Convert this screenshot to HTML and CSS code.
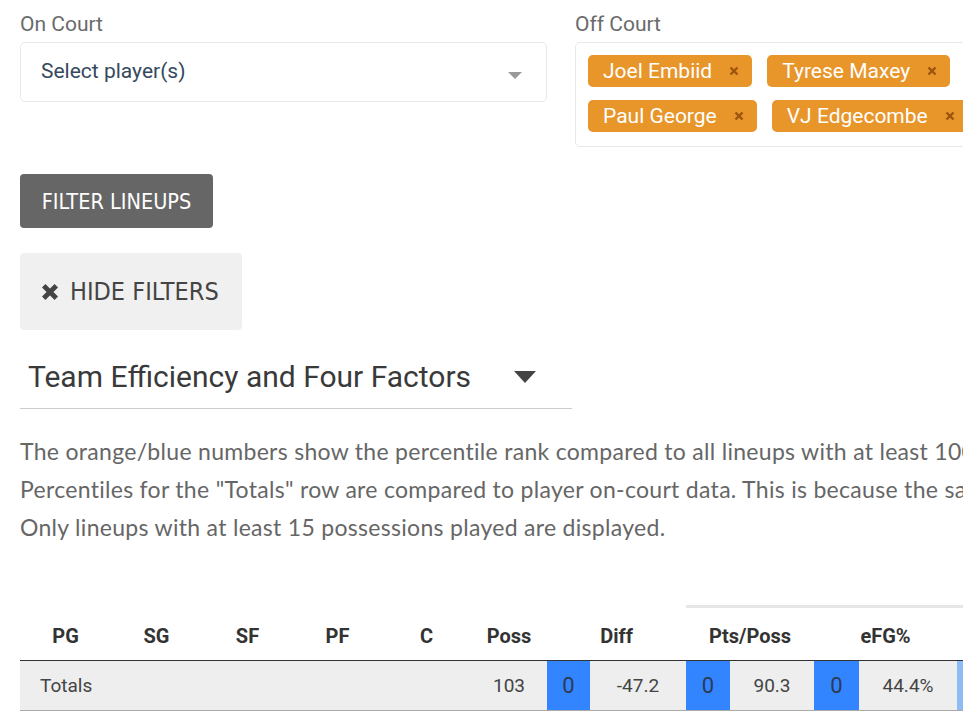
FILE: index.html
```html
<!DOCTYPE html>
<html lang="en">
<head>
  <meta charset="UTF-8" />
  <title>Lineups</title>
  <link rel="stylesheet" href="styles.css">
</head>
<body>
  <div class="page">
    <!-- player pickers -->
    <div class="pickers">
      <div class="picker">
        <label class="picker-label">On Court</label>
        <div class="select">
          <span class="select-placeholder">Select player(s)</span>
          <span class="select-caret"></span>
        </div>
      </div>
      <div class="picker">
        <label class="picker-label">Off Court</label>
        <div class="select select-tags">
          <span class="tag">Joel Embiid <svg class="tag-x" viewBox="0 0 10 10"><path d="M1.5 1.5L8.5 8.5M8.5 1.5L1.5 8.5"/></svg></span>
          <span class="tag">Tyrese Maxey <svg class="tag-x" viewBox="0 0 10 10"><path d="M1.5 1.5L8.5 8.5M8.5 1.5L1.5 8.5"/></svg></span>
          <span class="tag">Paul George <svg class="tag-x" viewBox="0 0 10 10"><path d="M1.5 1.5L8.5 8.5M8.5 1.5L1.5 8.5"/></svg></span>
          <span class="tag">VJ Edgecombe <svg class="tag-x" viewBox="0 0 10 10"><path d="M1.5 1.5L8.5 8.5M8.5 1.5L1.5 8.5"/></svg></span>
        </div>
      </div>
    </div>

    <button class="btn btn-filter">FILTER LINEUPS</button>
    <button class="btn btn-hide"><span class="btn-hide-inner"><svg class="hide-x" viewBox="0 0 12 12"><path d="M1.8 1.8L10.2 10.2M10.2 1.8L1.8 10.2"/></svg>HIDE FILTERS</span></button>

    <div class="stat-select">
      <span>Team Efficiency and Four Factors</span>
      <span class="stat-caret"></span>
    </div>

    <p class="note">
      The orange/blue numbers show the percentile rank compared to all lineups with at least 100 possessions played.<br>
      Percentiles for the "Totals" row are compared to player on-court data. This is because the sample is much larger.<br>
      Only lineups with at least 15 possessions played are displayed.
    </p>

    <table class="lineups">
      <colgroup>
        <col style="width:91px"><col style="width:91px"><col style="width:91px"><col style="width:89px"><col style="width:89px"><col style="width:76px">
        <col style="width:43px"><col style="width:96px">
        <col style="width:44px"><col style="width:84px">
        <col style="width:45px"><col style="width:98px">
        <col style="width:43px"><col style="width:96px">
      </colgroup>
      <thead>
        <tr class="group-row">
          <th colspan="8"></th>
          <th colspan="6" class="group-cell"></th>
        </tr>
        <tr class="head-row">
          <th>PG</th><th>SG</th><th>SF</th><th>PF</th><th>C</th><th>Poss</th>
          <th colspan="2">Diff</th>
          <th colspan="2">Pts/Poss</th>
          <th colspan="2">eFG%</th>
          <th colspan="2">TOV%</th>
        </tr>
      </thead>
      <tbody>
        <tr class="totals">
          <td colspan="5" class="label">Totals</td>
          <td>103</td>
          <td class="pct">0</td><td>-47.2</td>
          <td class="pct">0</td><td>90.3</td>
          <td class="pct">0</td><td>44.4%</td>
          <td class="pct pct-light">22</td><td>16.5%</td>
        </tr>
      </tbody>
    </table>
  </div>
</body>
</html>
```

FILE: styles.css
```css
html, body {
  margin: 0;
  overflow: hidden;
}
body {
  background: #fff;
  font-family: Roboto, "Noto Sans", sans-serif;
  color: #333;
}
.page {
  width: 1300px;
  padding: 12px 20px 0;
}

/* pickers */
.pickers {
  display: flex;
  gap: 28px;
}
.picker {
  width: 527px;
}
.picker-label {
  display: block;
  font-size: 21px;
  line-height: 24px;
  color: #6a6a6a;
  margin-bottom: 6px;
}
.select {
  box-sizing: border-box;
  min-height: 60px;
  border: 1px solid #e8e8e8;
  border-radius: 5px;
  display: flex;
  align-items: center;
  padding: 0 24px 0 20px;
}
.select-placeholder {
  flex: 1;
  font-size: 21px;
  color: #35495e;
  margin-top: -3px;
}
.select-caret {
  width: 0;
  height: 0;
  border-left: 7px solid transparent;
  border-right: 7px solid transparent;
  border-top: 7px solid #999;
  margin-top: 6px;
}
.select-tags {
  flex-wrap: wrap;
  gap: 13px 15px;
  padding: 12px 12px 14px;
}
.tag {
  display: inline-flex;
  align-items: center;
  height: 32px;
  padding: 0 13px 0 15px;
  background: #e8952a;
  color: #fff;
  font-size: 21px;
  border-radius: 5px;
  white-space: nowrap;
}
.tag-x {
  width: 10px;
  height: 10px;
  margin-left: 17px;
  stroke: #9c5510;
  stroke-width: 2.4;
  fill: none;
}

/* buttons */
.btn {
  display: block;
  border: none;
  border-radius: 4px;
  font-family: "DejaVu Sans Condensed", "Liberation Sans Narrow", Roboto, sans-serif;
  cursor: pointer;
}
.btn-filter {
  margin-top: 27px;
  width: 193px;
  height: 54px;
  padding: 0;
  background: #666;
  color: #fff;
  font-size: 21.5px;
}
.btn-hide {
  margin-top: 25px;
  width: 222px;
  height: 77px;
  background: #f0f0f0;
  color: #444;
  font-size: 25px;
  text-align: left;
  padding: 0 0 0 21px;
}
.btn-hide-inner {
  display: flex;
  align-items: center;
}
.hide-x {
  width: 18px;
  height: 18px;
  stroke: #444;
  stroke-width: 3.2;
  fill: none;
  margin-right: 11px;
}

/* stat category dropdown */
.stat-select {
  width: 552px;
  box-sizing: border-box;
  margin-top: 26px;
  padding: 0 36px 10px 8px;
  border-bottom: 1px solid #ccc;
  display: flex;
  align-items: center;
  justify-content: space-between;
  font-size: 30px;
  line-height: 42px;
  color: #3a3a3a;
}
.stat-caret {
  width: 0;
  height: 0;
  border-left: 11px solid transparent;
  border-right: 11px solid transparent;
  border-top: 12px solid #444;
}

.note {
  margin: 23px 0 0;
  font-family: Lato, "Noto Sans", sans-serif;
  font-size: 23px;
  letter-spacing: 0.3px;
  line-height: 38px;
  color: #666;
  white-space: nowrap;
}

/* lineup table */
.lineups {
  margin-top: 51px;
  border-collapse: collapse;
  table-layout: fixed;
  width: 1076px;
}
.group-row th {
  height: 8px;
  padding: 0;
}
.group-cell {
  border-bottom: 3px solid #e6e6e6;
}
.head-row th {
  height: 40px;
  padding: 0 0 12px;
  vertical-align: bottom;
  font-size: 20px;
  line-height: 23px;
  font-weight: 700;
  color: #333;
  text-align: center;
  border-bottom: 1px solid #333;
}
.totals td {
  height: 49px;
  padding: 0;
  background: #eee;
  font-size: 19px;
  color: #444;
  text-align: center;
  border-bottom: 1px solid #aaa;
}
.totals td.label {
  text-align: left;
  padding-left: 20px;
}
.totals td.pct {
  background: #3385ff;
  color: #2b3a55;
  font-size: 22px;
}
.totals td.pct-light {
  background: #8cbcf8;
}
```
